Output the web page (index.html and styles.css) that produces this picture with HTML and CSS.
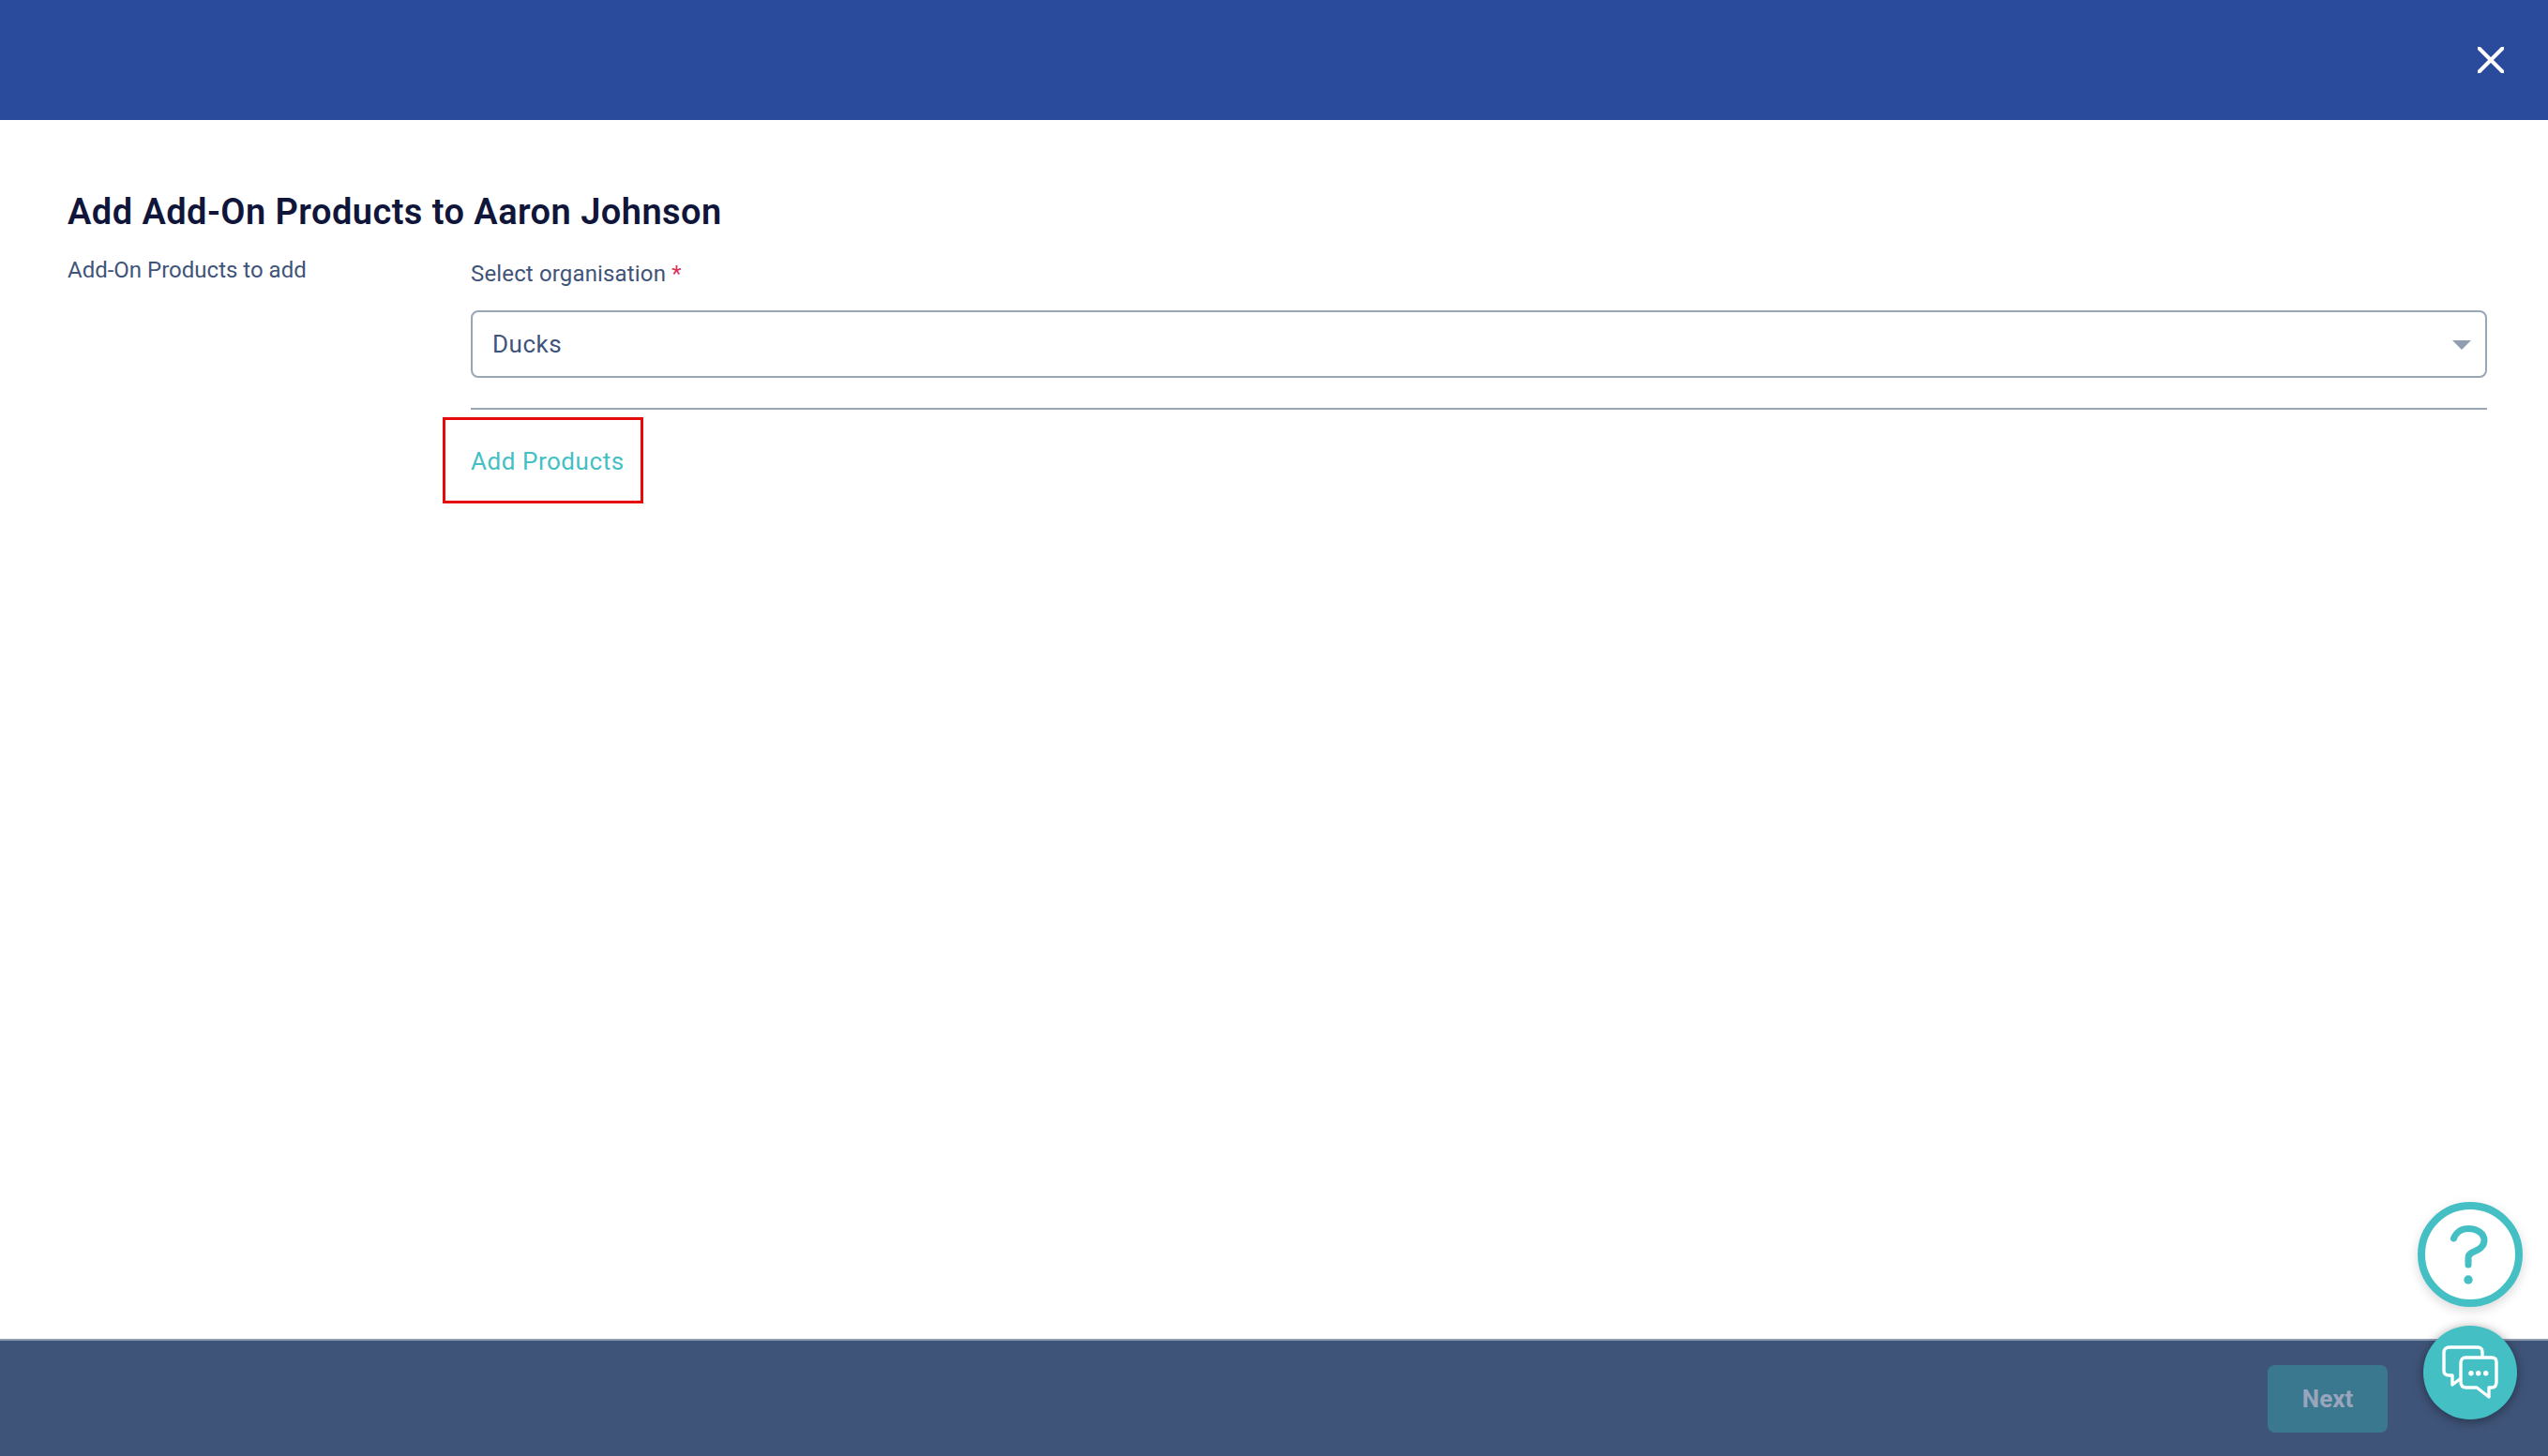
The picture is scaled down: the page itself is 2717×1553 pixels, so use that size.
FILE: index.html
```html
<!DOCTYPE html>
<html lang="en">
<head>
<meta charset="utf-8">
<title>Add Add-On Products</title>
<link rel="stylesheet" href="styles.css">
</head>
<body>
<div class="app">
  <header class="topbar">
    <button class="close" aria-label="Close">
      <svg width="28" height="28" viewBox="0 0 28 28"><path d="M1.5 1.5L26.5 26.5M26.5 1.5L1.5 26.5" stroke="#fff" stroke-width="4" stroke-linecap="round" fill="none"/></svg>
    </button>
  </header>
  <main class="content">
    <h1 class="title">Add Add-On Products to Aaron Johnson</h1>
    <div class="columns">
      <div class="side">Add-On Products to add</div>
      <div class="form">
        <label class="label">Select organisation <span class="req">*</span></label>
        <div class="select">
          <span>Ducks</span>
          <svg class="caret" width="20" height="10" viewBox="0 0 20 10"><path d="M0 0H20L10 10Z" fill="#919eb0"/></svg>
        </div>
        <hr class="rule">
        <div class="add-row">
          <a class="add">Add Products</a>
          <span class="highlight"></span>
        </div>
      </div>
    </div>
  </main>
  <footer class="footer">
    <button class="next">Next</button>
  </footer>
  <div class="help">
    <svg width="96" height="96" viewBox="0 0 96 96"><path d="M30.500 31C33 24 39 20.500 46 20.500C56 20.500 63 26 63 33C63 40 57 43 50 46C47 47.500 46 49 46 52V59" fill="none" stroke="#44c0c4" stroke-width="7" stroke-linecap="round" stroke-linejoin="round"/><circle cx="46" cy="75" r="4.700" fill="#44c0c4"/></svg>
  </div>
  <div class="chat">
    <svg width="60" height="58" viewBox="0 0 60 58"><path d="M43 12V7C43 3.500 41 2 38 2H8C4 2 2 4 2 8V27C2 30 4 32 8 32H11V42L19 36" fill="none" stroke="#fff" stroke-width="3.400" stroke-linejoin="round" stroke-linecap="round"/><path d="M25 13H53C56.500 13 58 15 58 18V39C58 43 56 45 53 45H50V55L37 45H26C22 45 20 43 20 39V19C20 15 22 13 25 13Z" fill="#44c0c4" stroke="#fff" stroke-width="3.400" stroke-linejoin="round"/><circle cx="31" cy="29.700" r="2.700" fill="#fff"/><circle cx="38.700" cy="29.700" r="2.700" fill="#fff"/><circle cx="46.700" cy="29.700" r="2.700" fill="#fff"/></svg>
  </div>
</div>
</body>
</html>
```
FILE: styles.css
```css
* { box-sizing: border-box; }
html, body { margin: 0; height: 100%; }
body { font-family: Roboto, "Liberation Sans", sans-serif; color: #3f5479; background: #fff; }
.app { position: relative; display: flex; flex-direction: column; height: 100vh; overflow: hidden; }
.topbar { flex: 0 0 128px; background: #2a4b9b; display: flex; justify-content: flex-end; align-items: center; padding-right: 47px; }
.close { width: 28px; height: 28px; padding: 0; border: 0; background: none; display: block; }
.close svg { display: block; }
.content { flex: 1; padding: 73px 65px 0 72px; }
.title { margin: 0; font-size: 38px; line-height: 50px; font-weight: 600; color: #10163a; letter-spacing: 0.45px; }
.columns { display: flex; margin-top: 22px; }
.side { flex: 0 0 430px; font-size: 24px; line-height: 30px; }
.form { flex: 1; }
.label { display: block; font-size: 24px; line-height: 30px; letter-spacing: 0.15px; margin-top: 4px; }
.req { color: #d8315b; }
.select { margin-top: 24px; height: 72px; border: 2px solid #98a6b6; border-radius: 8px; display: flex; align-items: center; justify-content: space-between; padding: 0 15px 0 21px; font-size: 26px; letter-spacing: 0.5px; }
.caret { display: block; margin-top: 1px; }
.rule { margin: 32px 0 0; border: 0; height: 2px; background: #98a6b6; }
.add-row { position: relative; padding-top: 38px; }
.add { font-size: 26px; line-height: 34px; font-weight: 400; color: #44c0c4; letter-spacing: 0.55px; display: inline-block; }
.highlight { position: absolute; left: -30px; top: 8px; width: 214px; height: 92px; border: 3px solid #e60b0b; }
.footer { flex: 0 0 125px; background: #3f5479; border-top: 2px solid #8f9db3; display: flex; justify-content: flex-end; align-items: flex-start; padding: 26px 171px 0 0; }
.next { width: 128px; height: 72px; border: 0; border-radius: 8px; background: #3a788f; color: #9aa5bd; font: 700 26px Roboto, "Liberation Sans", sans-serif; }
.help { position: absolute; left: 2578px; top: 1282px; width: 112px; height: 112px; border: 8px solid #44c0c4; border-radius: 50%; background: #fff; box-shadow: 0 4px 12px rgba(0,0,0,.15); }
.help svg { display: block; }
.chat { position: absolute; left: 2584px; top: 1414px; width: 100px; height: 100px; border-radius: 50%; background: #44c0c4; box-shadow: 0 2px 12px rgba(0,0,0,.4); display: flex; align-items: center; justify-content: center; }
.chat svg { display: block; }
```
